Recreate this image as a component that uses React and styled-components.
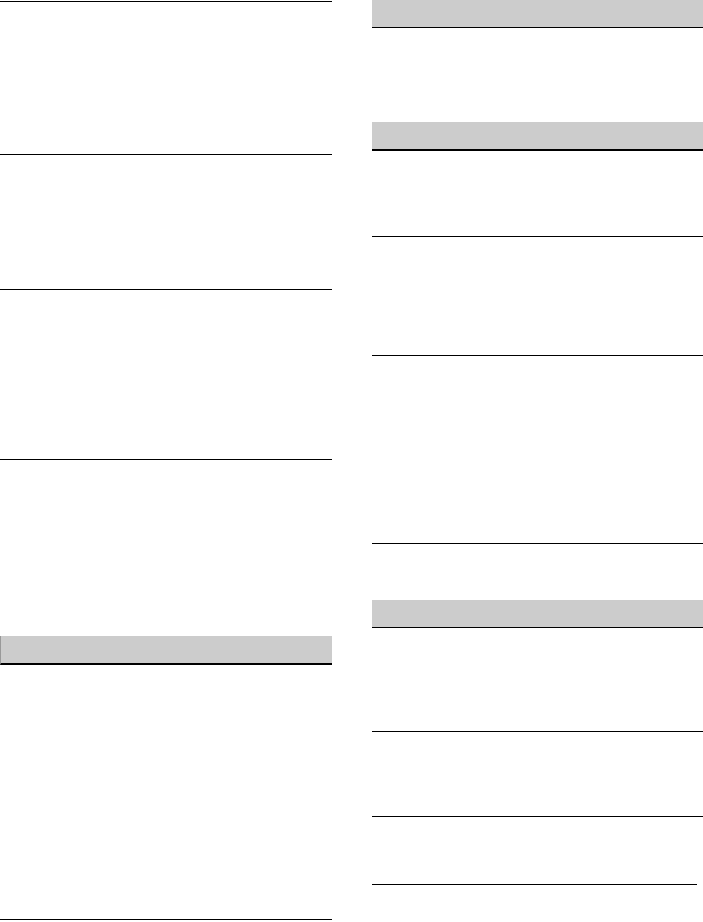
import React from 'react'
import styled, { createGlobalStyle } from 'styled-components'

const GlobalStyle = createGlobalStyle`
  html, body {
    margin: 0;
    padding: 0;
    background: #ffffff;
    font-family: "Liberation Sans", Arial, sans-serif;
  }
`

const Page = styled.div`
  display: flex;
  gap: 40px;
  width: 703px;
  height: 922px;
  overflow: hidden;
`

const Column = styled.div`
  display: flex;
  flex-direction: column;
  width: ${(p) => p.$w};
  flex: ${(p) => (p.$grow ? '1' : 'none')};
  padding-top: ${(p) => p.$top || 0}px;
`

const Block = styled.div`
  box-sizing: border-box;
  height: ${(p) => p.$h}px;
  margin-right: ${(p) => p.$inset || 0}px;
  border-top: ${(p) => (p.$ruled ? '1px solid #000' : 'none')};
`

const Header = styled.div`
  box-sizing: border-box;
  height: ${(p) => 27 + p.$rule}px;
  background: #cccccc;
  border-bottom: ${(p) => p.$rule}px solid #000;
  border-left: ${(p) => (p.$edge ? '1px solid #999' : 'none')};
`

const left = [
  { h: 153, ruled: true },
  { h: 135, ruled: true },
  { h: 170, ruled: true },
  { h: 177, ruled: true },
  { header: 2, edge: true },
  { h: 254 },
  { h: 3, ruled: true },
]

const right = [
  { header: 1 },
  { h: 94 },
  { header: 2 },
  { h: 85 },
  { h: 119, ruled: true },
  { h: 188, ruled: true },
  { h: 57, ruled: true },
  { header: 1 },
  { h: 103 },
  { h: 85, ruled: true },
  { h: 68, ruled: true },
  { h: 3, ruled: true, inset: 6 },
]

const renderParts = (parts) =>
  parts.map((part, i) =>
    part.header ? (
      <Header key={i} $rule={part.header} $edge={part.edge} />
    ) : (
      <Block key={i} $h={part.h} $ruled={part.ruled} $inset={part.inset} />
    )
  )

const App = () => {
  return (
    <>
      <GlobalStyle />
      <Page>
        <Column $w="332px" $top={1}>
          {renderParts(left)}
        </Column>
        <Column $grow>{renderParts(right)}</Column>
      </Page>
    </>
  )
}

export default App
